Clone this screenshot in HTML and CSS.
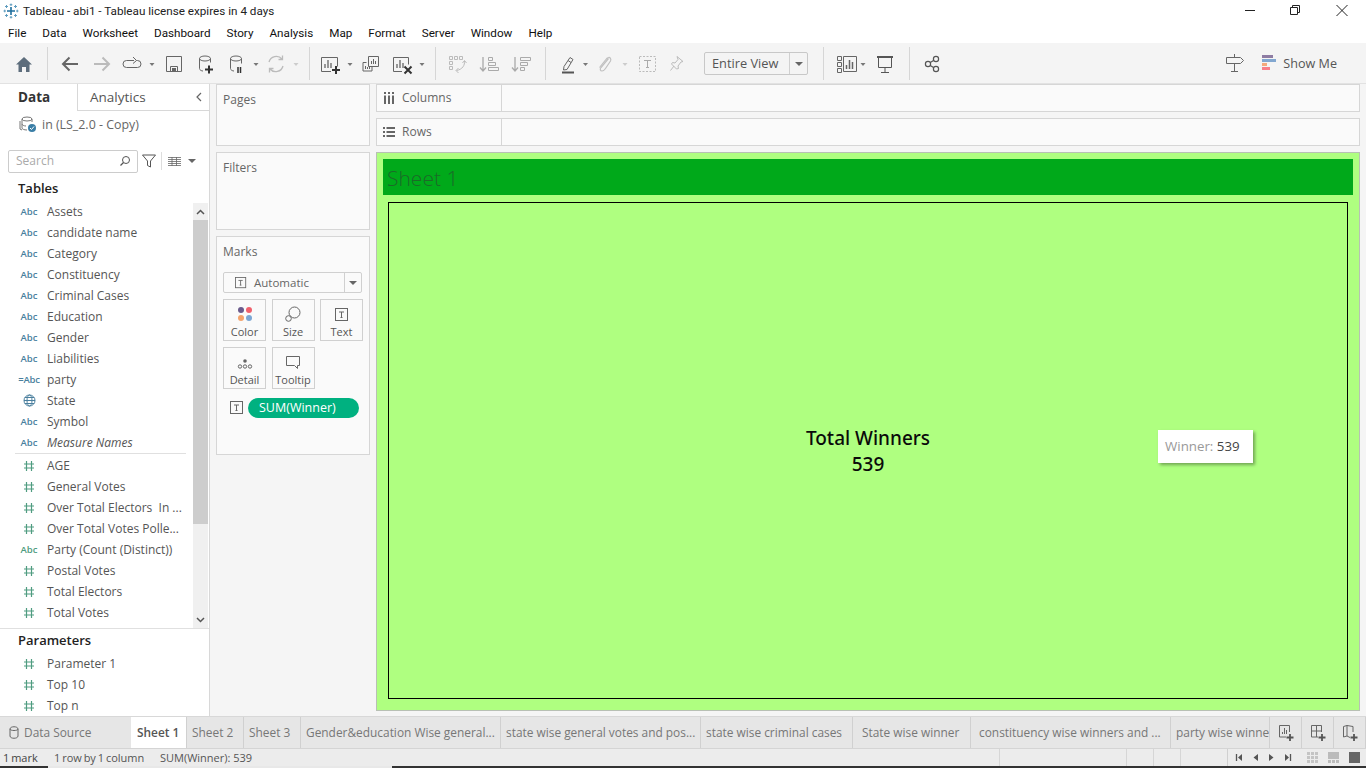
FILE: index.html
```html
<!DOCTYPE html>
<html>
<head>
  <title>Tableau - abi1</title>
  <meta charset="UTF-8"/>
  <link rel="stylesheet" href="styles.css">
</head>
<body>
<svg class="defs" width="0" height="0">
  <symbol id="hash" viewBox="0 0 12 12"><path d="M3.500 1v10M8.500 1v10M1 4h10M1 8h10" fill="none" stroke="#4f9c80" stroke-width="1.200"/></symbol>
  <symbol id="tbox" viewBox="0 0 14 14"><rect x=".5" y=".5" width="12" height="12" fill="none" stroke="#666"/><path d="M4 4h5M6.500 4v5.500M5.500 9.500h2" fill="none" stroke="#666"/></symbol>
</svg>
<div class="app">
  <div class="titlebar">
    <svg class="logo" width="16" height="16" viewBox="0 0 16 16"><path d="M8 4v8M4 8h8" stroke="#1f6f9e" stroke-width="1.600"/><path d="M8 .5v2.500M6.700 1.700h2.600M8 13v2.500M6.700 14.300h2.600M.5 8H3M1.700 6.700v2.600M13 8h2.500M14.300 6.700v2.600M3.500 2v3M2 3.500h3M12.500 2v3M11 3.500h3M3.500 11v3M2 12.500h3M12.500 11v3M11 12.500h3" stroke="#5f9dbf"/></svg>
    <span class="app-title">Tableau - abi1 - Tableau license expires in 4 days</span>
    <div class="win-btns">
      <svg width="140" height="22" viewBox="1226 0 140 22"><path d="M1245 10.500h10" stroke="#222"/><path d="M1290.500 7.500h7v7h-7zM1292.500 7.500v-2h7v7h-2" fill="none" stroke="#222"/><path d="M1336.500 5l11 11M1347.500 5l-11 11" stroke="#222"/></svg>
    </div>
  </div>
  <div class="menubar">
    <span>File</span><span>Data</span><span>Worksheet</span><span>Dashboard</span><span>Story</span><span>Analysis</span><span>Map</span><span>Format</span><span>Server</span><span>Window</span><span>Help</span>
  </div>

  <div class="toolbar">
    <svg width="47" height="41" viewBox="0 43 47 41"><path d="M16 64.500l8-7.500 8 7.500h-2.500v7.500h-3.500v-5h-4v5h-3.500v-7.500z" fill="#5d6d7c"/></svg>
    <i class="sep"></i>
    <svg width="261" height="41" viewBox="48 43 261 41">
      <path d="M78 64H63M69.500 57.500L63 64l6.500 6.500" fill="none" stroke="#666" stroke-width="2"/>
      <path d="M94 64h15M102.500 57.500L109 64l-6.500 6.500" fill="none" stroke="#bbb" stroke-width="2"/>
      <path d="M134 60.500h-7.500a3.500 3.500 0 0 0 0 7h11a3.500 3.500 0 0 0 0-7h-1M133 57l3.500 3.500-3.500 3" fill="none" stroke="#666"/>
      <path d="M149.500 63h5l-2.500 3z" fill="#777"/>
      <path d="M166.500 56.500h15v15h-15zM170.500 71.500v-5h7v5" fill="none" stroke="#666"/><path d="M172 68h4v3h-4z" fill="#666"/>
      <ellipse cx="205" cy="58.500" rx="5.500" ry="2.500" fill="none" stroke="#666"/><path d="M199.500 58.500v10c0 1.500 2 2.500 3.500 2.500M210.500 58.500v4" fill="none" stroke="#666"/>
      <path d="M209 65.500v8M205 69.500h8" stroke="#333" stroke-width="2"/>
      <ellipse cx="236" cy="58.500" rx="5.500" ry="2.500" fill="none" stroke="#666"/><path d="M230.500 58.500v10c0 1.500 2 2.500 3.500 2.500M241.500 58.500v5" fill="none" stroke="#666"/>
      <path d="M238 67v6M240.500 67v6" stroke="#333" stroke-width="1.500"/>
      <path d="M253.500 63h5l-2.500 3z" fill="#777"/>
      <path d="M269 62a7.500 7.500 0 0 1 13-3M283 66a7.500 7.500 0 0 1-13 3M282.500 55.500v4h-4M269.500 72.500v-4h4" fill="none" stroke="#bbb" stroke-width="1.300"/>
      <path d="M293.500 63h5l-2.500 3z" fill="#ccc"/>
    </svg>
    <i class="sep"></i>
    <svg width="125" height="41" viewBox="310 43 125 41">
      <path d="M331 71.500h-9.500v-14h16v9" fill="none" stroke="#666"/><path d="M325 68v-4M328 68v-8M331 68v-5" stroke="#666" stroke-width="1.300"/>
      <path d="M336 66v8M332 70h8" stroke="#333" stroke-width="2"/>
      <path d="M347.500 63h5l-2.500 3z" fill="#777"/>
      <path d="M368.500 56.500h10v10h-10zM366.500 62.500h-3.500v8.500h9v-4" fill="none" stroke="#666"/><path d="M371.500 64v-3M373.500 64v-5M375.500 64v-3M365.500 69v-3M367.500 69v-2M369.500 69v-2" stroke="#666"/>
      <path d="M402 71.500h-8.500v-14h15v7" fill="none" stroke="#666"/><path d="M397 68v-4M400 68v-8M403 68v-5" stroke="#666" stroke-width="1.300"/>
      <path d="M404.500 66.500l7 7M411.500 66.500l-7 7" stroke="#333" stroke-width="2"/>
      <path d="M419.500 63h5l-2.500 3z" fill="#777"/>
    </svg>
    <i class="sep"></i>
    <svg width="109" height="41" viewBox="436 43 109 41">
      <path d="M449.500 56.500h3v3h-3zM454.500 56.500h3v3h-3zM459.500 56.500h3v3h-3zM449.500 61.500h3v3h-3zM449.500 66.500h3v3h-3zM464.500 61c.5 4-2 8.500-8 9.500M458.500 68l-2.500 2.500 2.500 2.500M462.500 63l2-2.500 2 2.500" fill="none" stroke="#bbb"/>
      <path d="M483 57v14M480 67.500l3 3.500 3-3.500" fill="none" stroke="#aaa" stroke-width="1.300"/><path d="M488.500 57.500h4v3h-4zM488.500 62.500h7v3h-7zM488.500 67.500h10v3h-10z" fill="none" stroke="#aaa"/>
      <path d="M515 57v14M512 67.500l3 3.500 3-3.500" fill="none" stroke="#aaa" stroke-width="1.300"/><path d="M520.500 57.500h10v3h-10zM520.500 62.500h7v3h-7zM520.500 67.500h4v3h-4z" fill="none" stroke="#aaa"/>
    </svg>
    <i class="sep"></i>
    <svg width="148" height="41" viewBox="546 43 148 41">
      <path d="M570 57.500l3 2-6 10-3.500.5.500-3.500zM568 60.500l3 2" fill="none" stroke="#666"/><path d="M562 72.500h12" stroke="#555" stroke-width="2"/>
      <path d="M583 63h5l-2.500 3z" fill="#777"/>
      <path d="M608.500 58.500l-7.500 9c-1.500 2-.5 3.500 1 3.500s2.500-1 3.500-2.500l5-7.500c1-2-.5-4-2-3.500-1 .2-2 1-3 2.500l-6 7.500" fill="none" stroke="#c0c0c0" stroke-width="1.200"/>
      <path d="M622.500 63h5l-2.500 3z" fill="#ccc"/>
      <rect x="639.500" y="56.500" width="16" height="15" fill="none" stroke="#bbb" stroke-dasharray="2 1.500"/><path d="M644 60.500h7M647.500 60.500v7M646 67.500h3" fill="none" stroke="#aaa"/>
      <path d="M677 56.500l6 5-2 .5-3 4 .5 2.500-2 .5-5-5 1-1.500 2.500.5 3-3.500zM674 66l-3.500 4.500" fill="none" stroke="#bbb"/>
    </svg>
    <div class="fit-select"><span class="fit-label">Entire View</span><span class="fit-arrow"></span></div>
    <i class="sep sep-fit"></i>
    <svg width="85" height="41" viewBox="824 43 85 41">
      <path d="M837.500 56.500h4v4h-4zM837.500 62.500h4v4h-4zM837.500 68.500h4v4h-4zM843.500 56.500h13v15h-13z" fill="none" stroke="#666"/><path d="M846.500 69v-4M849.500 69v-9M852.500 69v-7" stroke="#666" stroke-width="1.500"/>
      <path d="M860.500 63h5l-2.500 3z" fill="#777"/>
      <path d="M877 57.500h16M878.500 57.500v10h13v-10M885 67.500v5M881 72.500h8" fill="none" stroke="#555"/><path d="M877 56h16v2h-16z" fill="#555"/>
    </svg>
    <i class="sep"></i>
    <svg width="50" height="41" viewBox="910 43 50 41">
      <g fill="none" stroke="#555" stroke-width="1.200"><circle cx="928" cy="64" r="2.600"/><circle cx="936" cy="59" r="2.600"/><circle cx="936" cy="69" r="2.600"/><path d="M930.300 62.500l3.200-2M930.300 65.500l3.200 2"/></g>
    </svg>
    <div class="tool-right">
      <svg width="24" height="24" viewBox="1223 52 24 24"><path d="M1226.500 58.500h14l3 3-3 3h-14z" fill="none" stroke="#666"/><path d="M1234.500 55v3.500M1234.500 64.500v7.500M1231 72.500h7" fill="none" stroke="#666"/></svg>
      <div class="showme">
        <svg width="15" height="16" viewBox="0 0 15 16"><path d="M0 0h11v3H0z" fill="#8e7ca3"/><path d="M0 4h14v3H0z" fill="#82a7d0"/><path d="M0 8h5v3H0z" fill="#f4a97c"/><path d="M0 12h8v3H0z" fill="#f87f8a"/></svg>
        <span>Show Me</span>
      </div>
    </div>
  </div>

  <div class="main">
    <div class="datapane">
      <div class="pane-tabs">
        <div class="pane-tab active">Data</div>
        <div class="pane-tab">Analytics<svg class="collapse" width="8" height="10" viewBox="0 0 8 10"><path d="M6 1L2 5l4 4" fill="none" stroke="#666" stroke-width="1.200"/></svg></div>
      </div>
      <div class="ds-row">
        <svg width="18" height="18" viewBox="0 0 18 18"><g fill="none" stroke="#777"><ellipse cx="8" cy="4" rx="5" ry="2"/><path d="M3 4v5c0 1 2 2 4 2M13 4v3M3 9v4c0 1 2 2 5 2"/><path d="M1 6v8l2 1"/></g><circle cx="13" cy="13" r="4" fill="#3a7ea6"/><path d="M11 13l1.500 1.500 2.500-3" fill="none" stroke="#fff"/></svg>
        <span>in (LS_2.0 - Copy)</span>
      </div>
      <div class="search-row">
        <div class="search"><span>Search</span>
          <svg width="12" height="12" viewBox="0 0 12 12"><circle cx="7" cy="5" r="3.500" fill="none" stroke="#555"/><path d="M4.500 7.500L1.500 10.500" stroke="#555" stroke-width="1.300"/></svg>
        </div>
        <svg class="funnel" width="14" height="14" viewBox="0 0 14 14"><path d="M.5 1h13L8.500 7v6l-3-1.500V7z" fill="none" stroke="#555"/></svg>
        <i class="search-sep"></i>
        <svg class="listicon" width="13" height="9" viewBox="0 0 13 9"><path d="M0 .5h13M0 2.500h13M0 4.500h13M0 6.500h13M0 8.500h13M4 0v9M8.500 0v9" stroke="#666" stroke-width=".8"/></svg>
        <span class="drop-arrow"></span>
      </div>
      <div class="pane-head">Tables</div>
      <div class="tables">
        <div class="fields">
          <div class="field"><span class="ty">Abc</span>Assets</div>
          <div class="field"><span class="ty">Abc</span>candidate name</div>
          <div class="field"><span class="ty">Abc</span>Category</div>
          <div class="field"><span class="ty">Abc</span>Constituency</div>
          <div class="field"><span class="ty">Abc</span>Criminal Cases</div>
          <div class="field"><span class="ty">Abc</span>Education</div>
          <div class="field"><span class="ty">Abc</span>Gender</div>
          <div class="field"><span class="ty">Abc</span>Liabilities</div>
          <div class="field"><span class="ty ty-calc">=Abc</span>party</div>
          <div class="field"><span class="ty"><svg width="13" height="13" viewBox="0 0 13 13"><g fill="none" stroke="#4a7f9e"><circle cx="6.500" cy="6.500" r="5.500"/><ellipse cx="6.500" cy="6.500" rx="2.500" ry="5.500"/><path d="M1 6.500h11M1.800 3.500h9.400M1.800 9.500h9.400"/></g></svg></span>State</div>
          <div class="field"><span class="ty">Abc</span>Symbol</div>
          <div class="field em"><span class="ty">Abc</span>Measure Names</div>
          <div class="field-rule"></div>
          <div class="field"><span class="ty"><svg class="hash"><use href="#hash"/></svg></span>AGE</div>
          <div class="field"><span class="ty"><svg class="hash"><use href="#hash"/></svg></span>General Votes</div>
          <div class="field"><span class="ty"><svg class="hash"><use href="#hash"/></svg></span>Over Total Electors&nbsp; In ...</div>
          <div class="field"><span class="ty"><svg class="hash"><use href="#hash"/></svg></span>Over Total Votes Polle...</div>
          <div class="field"><span class="ty ty-green">Abc</span>Party (Count (Distinct))</div>
          <div class="field"><span class="ty"><svg class="hash"><use href="#hash"/></svg></span>Postal Votes</div>
          <div class="field"><span class="ty"><svg class="hash"><use href="#hash"/></svg></span>Total Electors</div>
          <div class="field"><span class="ty"><svg class="hash"><use href="#hash"/></svg></span>Total Votes</div>
        </div>
        <div class="scrollbar">
          <div class="scroll-btn"><svg width="9" height="6" viewBox="0 0 9 6"><path d="M1 5l3.500-3.500L8 5" fill="none" stroke="#555" stroke-width="1.500"/></svg></div>
          <div class="scroll-track"><div class="scroll-thumb"></div></div>
          <div class="scroll-btn"><svg width="9" height="6" viewBox="0 0 9 6"><path d="M1 1l3.500 3.500L8 1" fill="none" stroke="#555" stroke-width="1.500"/></svg></div>
        </div>
      </div>
      <div class="pane-head params">Parameters</div>
      <div class="field"><span class="ty"><svg class="hash"><use href="#hash"/></svg></span>Parameter 1</div>
      <div class="field"><span class="ty"><svg class="hash"><use href="#hash"/></svg></span>Top 10</div>
      <div class="field"><span class="ty"><svg class="hash"><use href="#hash"/></svg></span>Top n</div>
    </div>

    <div class="cards">
      <div class="card card-pages">Pages</div>
      <div class="card card-filters">Filters</div>
      <div class="card card-marks">
        Marks
        <div class="mark-select">
          <svg width="12" height="12"><use href="#tbox" fill="#ccc"/></svg>
          <span>Automatic</span><span class="mark-arrow"></span>
        </div>
        <div class="mark-btns">
          <div class="mark-btn"><svg width="16" height="16" viewBox="0 0 16 16"><circle cx="4" cy="4" r="3" fill="#6a5a8c"/><circle cx="12" cy="4" r="3" fill="#f0606c"/><circle cx="4" cy="12" r="3" fill="#f4a36c"/><circle cx="12" cy="12" r="3" fill="#7ba6d4"/></svg>Color</div>
          <div class="mark-btn"><svg width="16" height="16" viewBox="0 0 16 16"><circle cx="9.500" cy="6.500" r="5.500" fill="none" stroke="#666"/><circle cx="3.500" cy="12.500" r="2.800" fill="#fafafa" stroke="#666"/></svg>Size</div>
          <div class="mark-btn"><svg width="14" height="14"><use href="#tbox"/></svg>Text</div>
          <div class="mark-btn"><svg width="16" height="16" viewBox="0 0 16 16"><circle cx="8" cy="7" r="1.800" fill="#666"/><g fill="none" stroke="#666"><circle cx="3" cy="12.500" r="1.700"/><circle cx="8" cy="12.500" r="1.700"/><circle cx="13" cy="12.500" r="1.700"/></g></svg>Detail</div>
          <div class="mark-btn"><svg width="16" height="16" viewBox="0 0 16 16"><path d="M1.500 2.500h13v9h-2v3l-3-3h-8z" fill="none" stroke="#666"/></svg>Tooltip</div>
        </div>
        <div class="mark-pill-row">
          <svg width="14" height="14"><use href="#tbox"/></svg>
          <div class="pill">SUM(Winner)</div>
        </div>
      </div>
    </div>

    <div class="workspace">
      <div class="shelf"><div class="shelf-label"><svg width="12" height="12" viewBox="0 0 12 12"><path d="M1 0h2v2H1zM5 0h2v2H5zM9 0h2v2H9zM1 3.500h2V12H1zM5 3.500h2V12H5zM9 3.500h2V12H9z" fill="#666"/></svg>Columns</div></div>
      <div class="shelf"><div class="shelf-label"><svg width="12" height="12" viewBox="0 0 12 12"><path d="M0 1h2v2H0zM3.500 1H12v2H3.500zM0 5h2v2H0zM3.500 5H12v2H3.500zM0 9h2v2H0zM3.500 9H12v2H3.500z" fill="#666"/></svg>Rows</div></div>
      <div class="view">
        <div class="view-title">Sheet 1</div>
        <div class="viz">
          <div>Total Winners</div>
          <div>539</div>
        </div>
        <div class="tooltip"><span>Winner:</span> 539</div>
      </div>
    </div>
  </div>

  <div class="tabbar">
    <div class="tab tab-ds"><svg width="10" height="13" viewBox="0 0 10 13"><path d="M1 3c0-3 8-3 8 0v7c0 3-8 3-8 0zM1 3c0 2 8 2 8 0" fill="none" stroke="#666"/></svg>Data Source</div>
    <div class="tab tab-on">Sheet 1</div>
    <div class="tab tab-s">Sheet 2</div>
    <div class="tab tab-s">Sheet 3</div>
    <div class="tab tab-l">Gender&amp;education Wise general...</div>
    <div class="tab tab-l">state wise general votes and pos...</div>
    <div class="tab tab-c">state wise criminal cases</div>
    <div class="tab tab-w">State wise winner</div>
    <div class="tab tab-l tab-k">constituency wise winners and ...</div>
    <div class="tab tab-p">party wise winners</div>
    <div class="tab-tool"><svg width="18" height="18" viewBox="0 0 18 18"><path d="M8 13H1.500V1.500h10V8" fill="none" stroke="#666"/><path d="M4.500 10V8M6.500 10V4M8.500 10V6" stroke="#666"/><path d="M12 10v7M8.500 13.500h7" stroke="#555" stroke-width="1.800"/></svg></div>
    <div class="tab-tool"><svg width="18" height="18" viewBox="0 0 18 18"><path d="M8 13H1.500V1.500h10V8M1.500 7h10M6.500 1.500V13" fill="none" stroke="#666"/><path d="M12 10v7M8.500 13.500h7" stroke="#555" stroke-width="1.800"/></svg></div>
    <div class="tab-tool"><svg width="18" height="18" viewBox="0 0 18 18"><path d="M8 13.500l-3-1.500-3.500 1V2.500L5 1.500l6 1V8M5 1.500V12" fill="none" stroke="#666"/><path d="M12 10v7M8.500 13.500h7" stroke="#555" stroke-width="1.800"/></svg></div>
  </div>

  <div class="statusbar">
    <span class="st-mark">1 mark</span>
    <span class="st-rows">1 row by 1 column</span>
    <span class="st-sum">SUM(Winner): 539</span>
    <i class="st-cell st-a"></i><i class="st-cell st-b"></i><i class="st-cell st-b"></i><i class="st-cell st-c"></i>
    <svg class="st-nav" width="139" height="17" viewBox="1227 749 139 17">
      <path d="M1227.500 749v17" stroke="#d0d0d0"/>
      <path d="M1236.500 754v7" stroke="#555" stroke-width="1.300"/><path d="M1242 754v7l-4-3.500zM1258 754v7l-4.500-3.500zM1269 754v7l4.500-3.500zM1285 754v7l4-3.500z" fill="#555"/><path d="M1290.500 754v7" stroke="#555" stroke-width="1.300"/>
      <path d="M1307 752h3v3h-3zM1311 752h3v3h-3zM1315 752h3v3h-3zM1307 756h3v3h-3zM1311 756h3v3h-3zM1315 756h3v3h-3zM1307 760h3v3h-3zM1311 760h3v3h-3zM1315 760h3v3h-3z" fill="#c4c4c4"/>
      <path d="M1328 752h11v7h-11zM1328 760h3v3h-3zM1332 760h3v3h-3zM1336 760h3v3h-3z" fill="#bbb"/>
      <path d="M1349 752h11v11h-11z" fill="#666"/>
    </svg>
  </div>
  <div class="taskbar"><i class="tk-dark"></i><i class="tk-light"></i><i class="tk-rest"></i></div>
</div>
</body>
</html>
```
FILE: styles.css
```css
*{
  box-sizing: border-box;
}
html, body{
  margin: 0;
  height: 100%;
  overflow: hidden;
}
body{
  font-family: "Open Sans", "Liberation Sans", sans-serif;
  font-size: 12px;
  color: #555;
  background: #fff;
}
i{
  display: block;
}
.defs{
  position: absolute;
}
.app{
  display: flex;
  flex-direction: column;
  width: 1366px;
  height: 768px;
}

/* window title + menu */
.titlebar{
  display: flex;
  align-items: center;
  height: 22px;
  padding-left: 3px;
  color: #222;
  flex: none;
}
.logo{
  flex: none;
}
.app-title{
  margin-left: 4px;
  font-family: Roboto, sans-serif;
  font-size: 11.700px;
}
.win-btns{
  margin-left: auto;
  height: 22px;
}
.menubar{
  display: flex;
  gap: 16px;
  align-items: center;
  height: 21px;
  padding-left: 8px;
  color: #111;
  font-family: Roboto, sans-serif;
  font-size: 11.700px;
  flex: none;
}

/* toolbar */
.toolbar{
  display: flex;
  align-items: center;
  height: 41px;
  background: #f4f4f4;
  border-bottom: 1px solid #e2e2e2;
  flex: none;
}
.toolbar > svg{
  flex: none;
}
.sep{
  width: 1px;
  height: 33px;
  background: #d6d6d6;
  flex: none;
}
.sep-fit{
  margin-left: 15px;
}
.fit-select{
  display: flex;
  align-items: stretch;
  width: 104px;
  height: 23px;
  margin-left: 10px;
  border: 1px solid #c8c8c8;
  border-radius: 2px;
  font-size: 12.800px;
  color: #555;
}
.fit-label{
  width: 85px;
  padding-left: 7px;
  line-height: 20px;
  border-right: 1px solid #d0d0d0;
}
.fit-arrow{
  width: 0;
  height: 0;
  margin: 9px 0 0 5px;
  border: 4px solid transparent;
  border-top: 4px solid #666;
  border-bottom: 0;
}
.tool-right{
  display: flex;
  align-items: center;
  margin-left: auto;
  padding-right: 29px;
}
.showme{
  display: flex;
  align-items: center;
  margin-left: 15px;
  font-size: 12.600px;
  color: #555;
}
.showme svg{
  margin-right: 6px;
}

/* main area */
.main{
  display: flex;
  height: 632px;
  background: #f5f5f5;
  flex: none;
}
.datapane{
  width: 210px;
  height: 632px;
  background: #fff;
  border-right: 1px solid #d8d8d8;
  overflow: hidden;
  flex: none;
}
.pane-tabs{
  display: flex;
  height: 27px;
}
.pane-tab{
  position: relative;
  flex: 1;
  padding: 4px 0 0 12px;
  font-size: 13.500px;
  color: #555;
  border-bottom: 1px solid #d8d8d8;
  border-left: 1px solid #d8d8d8;
}
.pane-tab.active{
  flex: none;
  width: 77px;
  padding-left: 18px;
  font-weight: 700;
  color: #333;
  border: 0;
}
.collapse{
  position: absolute;
  right: 6px;
  top: 8px;
}
.ds-row{
  display: flex;
  align-items: center;
  height: 26px;
  padding-left: 19px;
  color: #666;
  font-size: 12.400px;
}
.ds-row span{
  margin-left: 5px;
}
.search-row{
  display: flex;
  align-items: center;
  height: 24px;
  margin-top: 12px;
  padding-left: 8px;
}
.search{
  display: flex;
  align-items: center;
  justify-content: space-between;
  width: 130px;
  height: 23px;
  padding: 0 6px 0 7px;
  border: 1px solid #ccc;
  border-radius: 2px;
  color: #aaa;
}
.search span{
  padding-bottom: 2px;
}
.funnel{
  margin-left: 4px;
}
.search-sep{
  width: 1px;
  height: 18px;
  margin-left: 5px;
  background: #ddd;
}
.listicon{
  margin-left: 6px;
}
.drop-arrow{
  width: 0;
  height: 0;
  margin-left: 7px;
  border: 4px solid transparent;
  border-top: 4px solid #666;
  border-bottom: 0;
}
.pane-head{
  height: 30px;
  padding: 6px 0 0 18px;
  font-size: 13px;
  font-weight: 600;
  color: #222;
  line-height: 18px;
}
.tables{
  display: flex;
  height: 426px;
  border-bottom: 1px solid #e0e0e0;
}
.fields{
  width: 193px;
  margin-top: -2px;
  flex: none;
}
.field{
  display: flex;
  align-items: center;
  height: 21px;
  padding-left: 17px;
  font-size: 12px;
  color: #555;
  white-space: nowrap;
}
.field.em{
  font-style: italic;
}
.ty{
  display: flex;
  justify-content: center;
  width: 24px;
  margin-right: 6px;
  font-size: 9.500px;
  font-weight: 600;
  font-style: normal;
  color: #4a7f9e;
  flex: none;
}
.ty-calc{
  letter-spacing: -.2px;
}
.ty-green{
  color: #4f9c80;
}
.hash{
  width: 12px;
  height: 12px;
}
.field-rule{
  height: 1px;
  margin: 0 7px 1px 15px;
  background: #e0e0e0;
}
.scrollbar{
  display: flex;
  flex-direction: column;
  width: 15px;
  background: #f0f0f0;
}
.scroll-btn{
  display: flex;
  align-items: center;
  justify-content: center;
  height: 17px;
  flex: none;
}
.scroll-track{
  flex: 1;
}
.scroll-thumb{
  height: 304px;
  background: #cdcdcd;
}
.pane-head.params{
  height: 24px;
  padding-top: 2px;
}

/* pages / filters / marks */
.cards{
  display: flex;
  flex-direction: column;
  gap: 6px;
  width: 154px;
  margin-left: 6px;
  flex: none;
}
.card{
  padding: 7px 6px;
  background: #fafafa;
  border: 1px solid #d6d6d6;
  font-size: 12px;
  color: #666;
  line-height: 16px;
}
.card-pages{
  height: 62px;
}
.card-filters{
  height: 78px;
}
.card-marks{
  height: 219px;
}
.mark-select{
  display: flex;
  align-items: center;
  height: 21px;
  margin-top: 12px;
  padding-left: 11px;
  border: 1px solid #d0d0d0;
  border-radius: 2px;
  font-size: 11.500px;
  width: 139px;
}
.mark-select span:first-of-type{
  margin-left: 7px;
}
.mark-arrow{
  position: relative;
  width: 17px;
  height: 19px;
  margin-left: auto;
  border-left: 1px solid #d0d0d0;
}
.mark-arrow::after{
  content: "";
  position: absolute;
  left: 4px;
  top: 8px;
  border: 4px solid transparent;
  border-top: 4px solid #666;
  border-bottom: 0;
}
.mark-btns{
  display: grid;
  grid-template-columns: 43px 43px 43px;
  grid-auto-rows: 42px;
  gap: 6px 5.500px;
  margin-top: 6px;
}
.mark-btn{
  display: flex;
  flex-direction: column;
  align-items: center;
  justify-content: flex-end;
  gap: 3px;
  padding-bottom: 1px;
  border: 1px solid #d0d0d0;
  font-size: 11px;
  line-height: 14px;
  color: #555;
}
.mark-pill-row{
  display: flex;
  align-items: center;
  gap: 4px;
  margin: 9px 0 0 7px;
}
.pill{
  width: 111px;
  height: 20px;
  padding-left: 11px;
  border-radius: 10px;
  background: #00b180;
  color: #fff;
  font-size: 12.500px;
  line-height: 20px;
}

/* shelves and view */
.workspace{
  display: flex;
  flex-direction: column;
  gap: 6px;
  width: 984px;
  margin-left: 6px;
  flex: none;
}
.shelf{
  height: 28px;
  background: #fafafa;
  border: 1px solid #d6d6d6;
  flex: none;
}
.shelf-label{
  display: flex;
  align-items: center;
  gap: 7px;
  width: 125px;
  height: 26px;
  padding: 0 0 1px 6px;
  border-right: 1px solid #d6d6d6;
  color: #666;
}
.view{
  position: relative;
  display: flex;
  flex-direction: column;
  height: 559px;
  padding: 6px;
  background: #afff80;
  border: 1px solid #b8c0b4;
}
.view-title{
  height: 36px;
  padding-left: 4px;
  background: #00a91a;
  color: #1c6a28;
  font-size: 21px;
  font-weight: 300;
  line-height: 38px;
  flex: none;
}
.viz{
  display: flex;
  flex-direction: column;
  align-items: center;
  justify-content: center;
  height: 497px;
  margin: 7px 5px 0;
  border: 1px solid #000;
  color: #0a0a0a;
  font-family: "Noto Sans", sans-serif;
  font-size: 19px;
  font-weight: 500;
  line-height: 26px;
}
.tooltip{
  position: absolute;
  left: 781px;
  top: 277px;
  width: 95px;
  height: 33px;
  padding-left: 7px;
  background: #fff;
  box-shadow: 2px 2px 3px rgba(0, 0, 0, .35);
  color: #444;
  font-size: 13.300px;
  line-height: 33px;
}
.tooltip span{
  color: #999;
}

/* sheet tabs */
.tabbar{
  display: flex;
  height: 33px;
  background: #e6e6e6;
  border-top: 1px solid #d8d8d8;
  border-bottom: 1px solid #d4d4d4;
  flex: none;
}
.tab{
  height: 31px;
  padding-left: 5px;
  border-right: 1px solid #d0d0d0;
  color: #777;
  font-size: 11.900px;
  line-height: 31px;
  white-space: nowrap;
  overflow: hidden;
  flex: none;
}
.tab-ds{
  display: flex;
  align-items: center;
  gap: 5px;
  width: 131px;
  padding-left: 9px;
  border-right: 0;
}
.tab-on{
  width: 56px;
  padding-left: 6px;
  background: #fff;
  color: #555;
  font-weight: 600;
}
.tab-s{
  width: 57px;
}
.tab-l{
  width: 200px;
}
.tab-k{
  padding-left: 8px;
}
.tab-c{
  width: 152px;
}
.tab-w{
  width: 118px;
  padding-left: 9px;
}
.tab-p{
  width: 99px;
}
.tab-tool{
  display: flex;
  align-items: center;
  justify-content: center;
  width: 32px;
  height: 31px;
  padding-left: 2px;
  border-right: 1px solid #d0d0d0;
  flex: none;
}

/* status bar */
.statusbar{
  display: flex;
  align-items: center;
  height: 17px;
  background: #ececec;
  color: #555;
  font-size: 11px;
  flex: none;
}
.statusbar span{
  flex: none;
}
.st-mark{
  width: 54px;
  padding-left: 3px;
  color: #444;
  word-spacing: -1px;
}
.st-rows{
  width: 106px;
  word-spacing: -1px;
}
.st-sum{
  width: 839px;
}
.st-cell{
  height: 17px;
  border-left: 1px solid #d6d6d6;
  flex: none;
}
.st-a{
  width: 127px;
}
.st-b{
  width: 27px;
}
.st-c{
  width: 47px;
}
.st-nav{
  flex: none;
}
.taskbar{
  display: flex;
  height: 2px;
  flex: none;
}
.tk-dark{
  width: 48px;
  background: #333;
}
.tk-light{
  width: 344px;
  background: #e8e8e8;
}
.tk-rest{
  flex: 1;
  background: #333;
}
```
